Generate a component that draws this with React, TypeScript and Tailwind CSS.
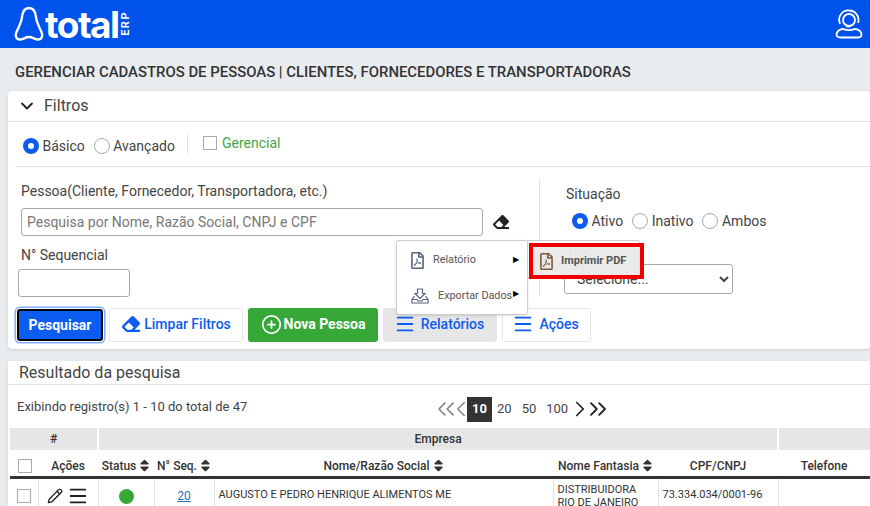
import { ChevronDown, ChevronLeft, ChevronRight, ChevronsLeft, ChevronsRight, CirclePlus, Menu, Pencil } from "lucide-react";
import { FaEraser, FaRegFilePdf, FaSort } from "react-icons/fa";

const Radio = ({ label, checked }: { label: string; checked?: boolean }) => (
  <label className="flex items-center gap-[3.5px]">
    {checked ? (
      <span className="flex h-4 w-4 items-center justify-center rounded-full bg-[#0d5cf0]">
        <span className="h-[6px] w-[6px] rounded-full bg-white" />
      </span>
    ) : (
      <span className="h-4 w-4 rounded-full border border-[#a9a9a9] bg-white" />
    )}
    <span>{label}</span>
  </label>
);

const Logo = () => (
  <div className="flex items-center text-white">
    <svg width="30" height="36" viewBox="0 0 30 36" fill="none" stroke="currentColor" strokeWidth="2.4">
      <path d="M15 2C10 2 8.5 6 8 11C7.5 16 5 21 2.5 26C1 29.5 2 33.5 6 33.5C9.5 33.5 11 31 15 31C19 31 20.5 33.5 24 33.5C28 33.5 29 29.5 27.500 26C25 21 22.500 16 22 11C21.500 6 20 2 15 2Z" />
    </svg>
    <span className="ml-[1px] font-['Inter',sans-serif] text-[37px] leading-none font-bold tracking-[-1.5px]">total</span>
    <span className="mt-[-2px] ml-[1px] w-[10px] rotate-180 font-['Roboto',sans-serif] text-[11px] leading-none font-bold tracking-[1.5px] [writing-mode:vertical-rl]">ERP</span>
  </div>
);

const SupportIcon = () => (
  <svg width="28" height="30" viewBox="0 0 28 30" fill="none" stroke="white" strokeWidth="1.8">
    <path d="M5 15C2 7 8 1 14 1.500C20 1.500 25 7 23 14" />
    <circle cx="14" cy="11" r="6" />
    <path d="M11 17.500H15" />
    <path d="M6 28.500C2.500 28.500 1.500 27 1.500 25.500C1.500 22 5 20 8.500 20C11 21.500 17 21.500 19.500 20C23 20 26.500 22 26.500 25.500C26.500 27 25.500 28.500 22 28.500Z" />
  </svg>
);

const ExportIcon = () => (
  <svg width="18" height="16" viewBox="0 0 18 16" fill="none" stroke="#54657c" strokeWidth="1.2">
    <path d="M6.500 1H11.500V5.500H14L9 10.500L4 5.500H6.500Z" />
    <path d="M3.500 8L1 11.500V15H17V11.500L14.500 8" />
    <path d="M1 11.500H6L7 13H11L12 11.500H17" />
  </svg>
);

const SortIcon = () => <FaSort className="ml-[3px] inline h-[15px] w-[11px] align-[-3px] text-[#333]" />;

const OutlineButton = ({ icon, label, className }: { icon: React.ReactNode; label: string; className: string }) => (
  <button className={`flex h-[34px] items-center justify-center rounded-[3px] pb-[2px] text-sm font-medium text-[#0d5cf0] ${className}`}>
    {icon}
    {label}
  </button>
);

export default function App() {
  return (
    <div className="h-[506px] w-[870px] overflow-hidden bg-[#e9ecef] font-['Roboto',sans-serif] text-[#333]">
      <header className="flex h-12 items-center justify-between bg-[#0052ec] pr-[7px] pl-[14px]">
        <Logo />
        <SupportIcon />
      </header>

      <div className="pl-2">
        <h1 className="flex h-[42px] items-center pt-[6px] pl-[7px] text-[14.9px] font-medium whitespace-nowrap text-[#333]">
          GERENCIAR CADASTROS DE PESSOAS | CLIENTES, FORNECEDORES E TRANSPORTADORAS
        </h1>

        <section className="relative h-[259px] rounded-sm border-t border-[#dee2e6] bg-white shadow-sm">
          <div className="flex h-[31px] items-center border-b border-[#dee2e6] pl-[9px] text-base text-[#444]">
            <ChevronDown className="h-5 w-5 text-[#222]" strokeWidth={2.2} />
            <span className="ml-[7px]">Filtros</span>
          </div>

          <div className="ml-[7px] flex h-[45px] items-center border-b border-[#dee2e6] pl-2 text-sm text-[#444]">
            <div className="flex items-center gap-[9px] pt-[3px]">
              <Radio label="Básico" checked />
              <Radio label="Avançado" />
            </div>
            <span className="mx-3 h-5 w-px bg-[#dee2e6]" />
            <label className="ml-[3px] flex items-center gap-[5px] pb-[3px] text-[#46a546]">
              <span className="h-[14px] w-[14px] border border-[#aaa] bg-white" />
              Gerencial
            </label>
          </div>

          <div className="flex h-[141px]">
            <div className="w-[531px] pt-[16px] pl-[10px] text-sm text-[#444]">
              <p className="pl-[3px] leading-[17px]">Pessoa(Cliente, Fornecedor, Transportadora, etc.)</p>
              <div className="mt-[8px] flex items-center pl-[3px]">
                <input
                  className="h-[28px] w-[462px] rounded-[3px] border border-[#aaa] px-[5px] text-sm placeholder:text-[#777]"
                  placeholder="Pesquisa por Nome, Razão Social, CNPJ e CPF"
                />
                <FaEraser className="ml-[10px] h-[16px] w-[16px] text-[#222]" />
              </div>
              <p className="mt-[11px] pl-[3px] leading-[17px]">N° Sequencial</p>
              <input className="mt-[5px] h-[28px] w-[112px] rounded-[3px] border border-[#aaa]" />
            </div>
            <div className="my-[12px] w-px bg-[#dee2e6]" />
            <div className="pl-[26px] text-sm text-[#444]">
              <p className="pt-[19px] leading-[17px]">Situação</p>
              <div className="mt-[8px] flex items-center gap-[9px] pl-[6px]">
                <Radio label="Ativo" checked />
                <Radio label="Inativo" />
                <Radio label="Ambos" />
              </div>
              <p className="mt-[12px] leading-[17px]">Tipo</p>
              <select className="mt-[4px] ml-[-2px] h-[30px] w-[169px] rounded-[3px] border border-[#aaa] bg-white px-2 text-sm text-[#444]">
                <option>Selecione...</option>
              </select>
            </div>
          </div>

          <div className="absolute top-[217px] left-[8px] flex items-center gap-[5px]">
            <button className="mx-[1px] h-[32px] w-[86px] rounded-[3px] border-2 border-black bg-[#0d5cf0] text-sm font-bold text-white shadow-[0_0_0_1px_#ffffff,0_0_0_2.5px_#7fb0f8]">
              Pesquisar
            </button>
            <OutlineButton
              className="w-[134px] gap-[3px] border border-[#e4e6e9] bg-white"
              icon={<FaEraser className="h-[18px] w-[20px]" />}
              label="Limpar Filtros"
            />
            <button className="flex h-[34px] w-[130px] items-center justify-center gap-[2px] rounded-[3px] bg-[#35a838] pb-[2px] text-sm font-bold text-white">
              <CirclePlus className="h-[21px] w-[21px]" strokeWidth={2} />
              Nova Pessoa
            </button>
            <OutlineButton
              className="w-[114px] gap-[5px] bg-[#e6e6e6] pr-[2px]"
              icon={<Menu className="h-[22px] w-[22px]" />}
              label="Relatórios"
            />
            <OutlineButton
              className="w-[89px] gap-[5px] border border-[#e4e6e9] bg-white pr-[2px]"
              icon={<Menu className="h-[22px] w-[22px]" />}
              label="Ações"
            />
          </div>

          <div className="absolute top-[149px] left-[518px] h-[38px] w-[114px] rounded-[2px] border border-[#ccc] bg-white/70" />

          <div className="absolute top-[149px] left-[388px] h-[75px] w-[132px] rounded-[3px] border border-[#ccc] bg-white pt-[1px] text-[10.8px] text-[#555] shadow">
            <div className="flex h-[36px] items-center pl-[14px]">
              <FaRegFilePdf className="h-[17px] w-[13px] text-[#54657c]" />
              <span className="ml-[9px]">Relatório</span>
              <span className="ml-[37px] text-[8px] text-black">▶</span>
            </div>
            <div className="flex h-[36px] items-center pl-[14px]">
              <ExportIcon />
              <span className="ml-[9px] whitespace-nowrap">Exportar Dados</span>
              <span className="mb-[4px] ml-[1px] text-[8px] text-black">▶</span>
            </div>
          </div>

          <div className="absolute top-[152px] left-[521px] flex h-[36px] w-[115px] items-center border-[4px] border-[#ee0000] bg-[#e8e8e8]/90 pl-[7px] text-[11px] font-bold text-[#555]">
            <FaRegFilePdf className="h-[17px] w-[13px] text-[#7b5b3e]" />
            <span className="ml-[8px]">Imprimir PDF</span>
          </div>
        </section>

        <section className="mt-[12px] bg-white shadow-sm">
          <div className="flex h-[24px] items-center border-b border-[#dee2e6] pl-[11px] text-base text-[#444]">
            Resultado da pesquisa
          </div>

          <div className="relative flex h-[43px] items-center pt-[1px] pl-[9px] text-[13px] text-[#444]">
            Exibindo registro(s) 1 - 10 do total de 47
            <div className="absolute top-[10px] left-[424px] flex items-center text-[13px]">
              <ChevronsLeft className="h-[28px] w-[28px] text-[#888]" strokeWidth={1.5} />
              <ChevronLeft className="ml-[-12px] h-[26px] w-[26px] text-[#888]" strokeWidth={1.5} />
              <span className="ml-[-7px] flex h-[25px] w-[25px] items-center justify-center bg-[#333] font-bold text-white">10</span>
              <span className="ml-[5px]">20</span>
              <span className="ml-[10px]">50</span>
              <span className="ml-[10px]">100</span>
              <ChevronRight className="ml-[-1px] h-[26px] w-[26px] text-[#222]" strokeWidth={1.6} />
              <ChevronsRight className="ml-[-9px] h-[28px] w-[28px] text-[#222]" strokeWidth={1.6} />
            </div>
          </div>

          <table className="ml-[2px] w-[860px] table-fixed border-collapse text-xs text-[#333]">
            <colgroup>
              <col className="w-[28px]" />
              <col className="w-[60px]" />
              <col className="w-[56px]" />
              <col className="w-[60px]" />
              <col className="w-[339px]" />
              <col className="w-[105px]" />
              <col className="w-[120px]" />
              <col className="w-[92px]" />
            </colgroup>
            <thead>
              <tr className="h-[22px] bg-[#e6e6e6] font-medium">
                <th colSpan={2} className="border-r-2 border-white font-medium">#</th>
                <th colSpan={5} className="border-r-2 border-white font-medium">Empresa</th>
                <th />
              </tr>
              <tr className="h-[27px] border-b-[3px] border-[#333]">
                <th className="pt-[6px] pl-[1px] font-medium">
                  <span className="block h-[14px] w-[14px] translate-x-[7px] border border-[#aaa]" />
                </th>
                <th className="pt-[6px] font-medium">Ações</th>
                <th className="pt-[6px] font-medium whitespace-nowrap">Status<SortIcon /></th>
                <th className="pt-[6px] font-medium whitespace-nowrap">N° Seq.<SortIcon /></th>
                <th className="pt-[6px] font-medium">Nome/Razão Social<SortIcon /></th>
                <th className="pt-[6px] font-medium whitespace-nowrap">Nome Fantasia<SortIcon /></th>
                <th className="pt-[6px] font-medium">CPF/CNPJ</th>
                <th className="pt-[6px] font-medium">Telefone</th>
              </tr>
            </thead>
            <tbody>
              <tr className="h-[36px]">
                <td className="border-r border-[#dee2e6]">
                  <span className="block h-[14px] w-[14px] translate-x-[7px] border border-[#aaa]" />
                </td>
                <td className="border-r border-[#dee2e6]">
                  <div className="flex items-center justify-center gap-[4px]">
                    <Pencil className="h-4 w-4 text-[#222]" />
                    <Menu className="h-[22px] w-[22px] text-[#222]" />
                  </div>
                </td>
                <td className="border-r border-[#dee2e6] text-center">
                  <span className="inline-block h-[15px] w-[15px] rounded-full bg-[#35a838] align-middle" />
                </td>
                <td className="border-r border-[#dee2e6] text-center">
                  <a className="text-[#1f6fb5] underline">20</a>
                </td>
                <td className="border-r border-[#dee2e6] pl-1 text-[11px]">AUGUSTO E PEDRO HENRIQUE ALIMENTOS ME</td>
                <td className="border-r border-[#dee2e6] pl-1 text-[11px] leading-[13px]">
                  DISTRIBUIDORA<br />RIO DE JANEIRO
                </td>
                <td className="border-r border-[#dee2e6] pl-1 text-[11px]">73.334.034/0001-96</td>
                <td />
              </tr>
            </tbody>
          </table>
        </section>
      </div>
    </div>
  );
}
